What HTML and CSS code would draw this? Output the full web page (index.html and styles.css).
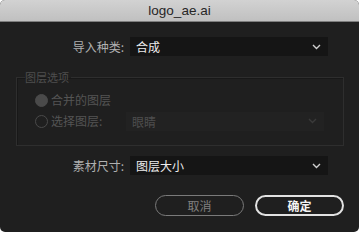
FILE: index.html
```html
<!DOCTYPE html>
<html lang="zh-CN">
<head>
<meta charset="utf-8">
<title>logo_ae.ai</title>
<link rel="stylesheet" href="styles.css">
</head>
<body>
<div class="win">
  <div class="titlebar">logo_ae.ai</div>
  <div class="content">
    <div class="row">
      <span class="label">导入种类:</span>
      <div class="select">
        <span class="val">合成</span>
        <svg class="chev" width="9" height="6" viewBox="0 0 9 6"><polyline points="1,1 4.5,4.5 8,1" fill="none" stroke="#cfcfcf" stroke-width="1.4"/></svg>
      </div>
    </div>
    <fieldset class="group">
      <legend class="legend">图层选项</legend>
      <div class="radio-row">
        <span class="radio filled"></span>
        <span class="rtext">合并的图层</span>
      </div>
      <div class="radio-row">
        <span class="radio"></span>
        <span class="rtext rlabel">选择图层:</span>
        <div class="select disabled">
          <span class="val">眼睛</span>
          <svg class="chev" width="9" height="6" viewBox="0 0 9 6"><polyline points="1,1 4.5,4.5 8,1" fill="none" stroke="#3a3a3a" stroke-width="1.4"/></svg>
        </div>
      </div>
    </fieldset>
    <div class="row row3">
      <span class="label">素材尺寸:</span>
      <div class="select">
        <span class="val">图层大小</span>
        <svg class="chev" width="9" height="6" viewBox="0 0 9 6"><polyline points="1,1 4.5,4.5 8,1" fill="none" stroke="#cfcfcf" stroke-width="1.4"/></svg>
      </div>
    </div>
    <div class="buttons">
      <button class="btn cancel">取消</button>
      <button class="btn ok">确定</button>
    </div>
  </div>
</div>
</body>
</html>
```
FILE: styles.css
```css
html, body {
  margin: 0;
  padding: 0;
  background: #ffffff;
}
body {
  font-family: "Noto Sans CJK SC", "Liberation Sans", sans-serif;
  font-size: 12px;
}
.win {
  width: 359px;
  height: 232px;
  background: #1f1f1f;
  border-radius: 5px;
  overflow: hidden;
  display: flex;
  flex-direction: column;
}
.titlebar {
  height: 22px;
  box-sizing: border-box;
  background: linear-gradient(#d2d2d2, #c0c0c0);
  border-bottom: 1px solid #7e7e7e;
  text-align: center;
  font-family: "Liberation Sans", "Noto Sans", sans-serif;
  font-size: 13.5px;
  line-height: 22px;
  color: #262626;
}
.content {
  padding-top: 15px;
  display: flex;
  flex-direction: column;
}
.row {
  display: flex;
  align-items: center;
  height: 19px;
}
.label {
  width: 125px;
  box-sizing: border-box;
  text-align: right;
  color: #b0b0b0;
  line-height: 19px;
  padding-right: 1px;
}
.select {
  margin-left: 5px;
  width: 198px;
  height: 19px;
  background: #151515;
  display: flex;
  align-items: center;
  justify-content: space-between;
  padding: 0 7px 0 6px;
  box-sizing: border-box;
}
.val {
  color: #ededed;
  line-height: 19px;
}
.chev {
  display: block;
}
.group {
  margin: 14px 15px 0 16px;
  padding: 6px 0 14px 18px;
  border: 1px solid #2e2e2e;
  box-shadow: inset 1px 1px 0 #181818;
  min-inline-size: 0;
}
.legend {
  padding: 0 2px 0 0;
  margin-left: -10px;
  color: #4e4e4e;
  line-height: 14px;
  font-size: 11px;
}
.radio-row {
  display: flex;
  align-items: center;
  height: 20px;
}
.radio-row + .radio-row {
  margin-top: 1px;
}
.radio {
  width: 13px;
  height: 13px;
  box-sizing: border-box;
  border-radius: 50%;
  border: 1.5px solid #4a4a4a;
}
.radio.filled {
  background: #4a4a4a;
}
.rtext {
  margin-left: 3px;
  color: #545454;
  line-height: 20px;
}
.rlabel {
  width: 62px;
}
.select.disabled {
  margin-left: 13px;
  background: #222222;
}
.select.disabled .val {
  color: #4e4e4e;
}
.row3 {
  margin-top: 10px;
}
.buttons {
  display: flex;
  justify-content: flex-end;
  gap: 11px;
  margin-top: 20px;
  padding-right: 15px;
}
.btn {
  width: 89px;
  height: 21px;
  box-sizing: border-box;
  border-radius: 11px;
  background: #1f1f1f;
  font-family: "Noto Sans CJK SC", "Liberation Sans", sans-serif;
  font-size: 12px;
  line-height: 17px;
  padding: 0;
}
.cancel {
  border: 1.5px solid #7a7a7a;
  color: #808080;
}
.ok {
  border: 2px solid #e2e2e2;
  color: #f4f4f4;
  font-weight: bold;
}
```
